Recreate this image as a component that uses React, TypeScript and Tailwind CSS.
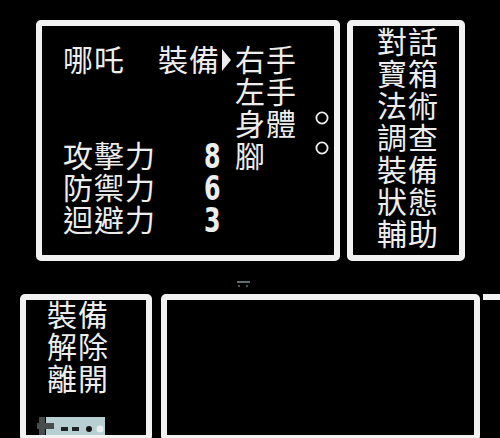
import React from "react"

const CJK = "font-['Noto_Sans_CJK_TC','Noto_Sans_CJK_JP',sans-serif] text-[30px] leading-[32px] tracking-[1px] text-[#ededed]"

const MENU = ["對話", "寶箱", "法術", "調查", "裝備", "狀態", "輔助"]
const SUB = ["裝備", "解除", "離開"]

function Ring() {
  return (
    <svg width="14" height="14" viewBox="0 0 14 14" className="block">
      <circle cx="7" cy="7" r="5.6" fill="none" stroke="#ededed" strokeWidth="1.8" />
    </svg>
  )
}

function Num({ v }: { v: string }) {
  return (
    <span className="inline-block origin-left scale-x-[0.7] font-['DejaVu_Sans',sans-serif] font-bold text-[34px] leading-[32px] text-[#ededed] translate-y-[1px]">
      {v}
    </span>
  )
}

export default function App() {
  return (
    <div className="w-[500px] h-[438px] bg-black overflow-hidden">
      {/* top row */}
      <div className="flex pt-[20px] pl-[36px] gap-[7px]">
        <div className="w-[304px] h-[241px] border-[6px] border-[#f2f2f2] rounded-[5px] bg-black pl-[21px] pt-[16px]">
          <div className={`grid grid-cols-[95px_64px_13px_80px_16px] auto-rows-[32px] ${CJK}`}>
            <span>哪吒</span>
            <span>裝備</span>
            <span className="pt-[7px]">
              <svg width="9" height="22" viewBox="0 0 9 22" className="block">
                <polygon points="0,0 9,11 0,22" fill="#ededed" />
              </svg>
            </span>
            <span>右手</span>
            <span />

            <span /><span /><span />
            <span>左手</span>
            <span />

            <span /><span /><span />
            <span>身體</span>
            <span className="pt-[5px]"><Ring /></span>

            <span>攻擊力</span>
            <span className="pl-[46px]"><Num v="8" /></span>
            <span />
            <span>腳</span>
            <span className="pt-[3px]"><Ring /></span>

            <span>防禦力</span>
            <span className="pl-[46px]"><Num v="6" /></span>
            <span /><span /><span />

            <span>迴避力</span>
            <span className="pl-[46px]"><Num v="3" /></span>
            <span /><span /><span />
          </div>
        </div>

        <div className="w-[118px] h-[241px] border-[6px] border-[#f2f2f2] rounded-[5px] bg-black pl-[24px]">
          <div className={`flex flex-col -mt-[2px] ${CJK}`}>
            {MENU.map((m) => (
              <span key={m}>{m}</span>
            ))}
          </div>
        </div>
      </div>

      {/* gap with stray mark */}
      <div className="h-[33px] pl-[237px] pt-[20px]">
        <div className="w-[13px] h-[2px] bg-[#5f6e6e]" />
        <div className="flex gap-[6px] pt-[2px] pl-[1px]">
          <div className="w-[2px] h-[2px] bg-[#4a5656]" />
          <div className="w-[2px] h-[2px] bg-[#4a5656]" />
        </div>
      </div>

      {/* bottom row */}
      <div className="flex pl-[20px]">
        <div className="w-[132px] h-[147px] border-[6px] border-[#f2f2f2] rounded-[5px] bg-black pl-[11px] flex flex-col justify-between">
          <div className={`flex flex-col pl-[10px] -mt-[3px] ${CJK}`}>
            {SUB.map((m) => (
              <span key={m}>{m}</span>
            ))}
          </div>
          <svg width="68" height="18" viewBox="0 0 68 18" className="block">
            <rect x="9" y="0" width="59" height="18" fill="#b7ced2" />
            <rect x="2" y="0" width="6" height="18" fill="#474c4d" />
            <rect x="0" y="6" width="17" height="6" fill="#474c4d" />
            <rect x="24" y="10" width="7" height="4" fill="#1d2224" />
            <rect x="35" y="10" width="7" height="4" fill="#1d2224" />
            <circle cx="52" cy="12" r="3" fill="#111" />
            <circle cx="63" cy="12" r="3.5" fill="#e6eef0" />
          </svg>
        </div>

        <div className="ml-[9px] w-[319px] h-[147px] border-[6px] border-[#f2f2f2] rounded-[5px] bg-black" />

        <div className="ml-[3px] flex-1 h-[147px] border-t-[6px] border-[#f2f2f2] bg-black" />
      </div>
    </div>
  )
}
